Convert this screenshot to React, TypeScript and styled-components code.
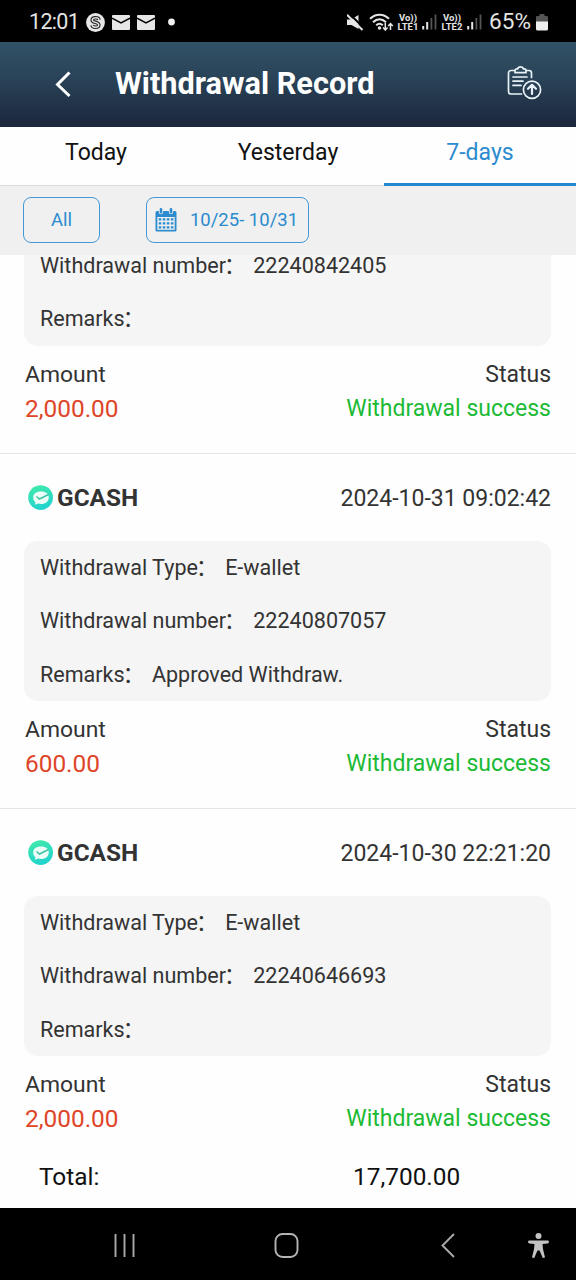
import React from "react";
import styled, { createGlobalStyle } from "styled-components";

const GlobalStyle = createGlobalStyle`
  * { box-sizing: border-box; }
  body { margin: 0; background: #000; font-family: Roboto, "Noto Sans CJK SC", sans-serif; }
`;

const Screen = styled.div`
  width: 576px;
  height: 1280px;
  display: flex;
  flex-direction: column;
  overflow: hidden;
  background: #fefefe;
  color: #333;
`;

const StatusBar = styled.div`
  height: 42px;
  flex: none;
  display: flex;
  align-items: center;
  justify-content: space-between;
  background: #000;
  color: #e4e4e4;
  padding: 2px 28px 0 29px;
`;

const StatusGroup = styled.div<{ $gap: number }>`
  display: flex;
  align-items: center;
  gap: ${(p) => p.$gap}px;
  svg { display: block; flex: none; }
`;

const Clock = styled.span`
  font-size: 21.5px;
  line-height: 26px;
  letter-spacing: -0.7px;
  width: 50px;
  white-space: nowrap;
`;

const Battery = styled.span`
  font-size: 22.6px;
  line-height: 26px;
  width: 43px;
  margin: 0 1px 0 4px;
`;

const Volte = styled.span<{ $w: number }>`
  display: flex;
  flex-direction: column;
  align-items: center;
  width: ${(p) => p.$w}px;
  font-size: 9.5px;
  line-height: 9px;
  font-weight: 700;
  white-space: nowrap;
`;

const Header = styled.header`
  height: 85px;
  flex: none;
  display: flex;
  align-items: center;
  padding: 0 34px 2px 54px;
  background: linear-gradient(#325267, #294257 45%, #1a263b);
  color: #fff;
  svg { display: block; }
`;

const Title = styled.h1`
  flex: 1;
  margin: 0 0 0 43px;
  font-size: 30.7px;
  line-height: 36px;
  font-weight: 700;
`;

const Tabs = styled.nav`
  height: 59px;
  flex: none;
  display: grid;
  grid-template-columns: repeat(3, 1fr);
  border-bottom: 1px solid #dcdcdc;
`;

const Tab = styled.div<{ $active?: boolean }>`
  height: 59px;
  padding-top: 12px;
  text-align: center;
  font-size: 23px;
  line-height: 28px;
  color: ${(p) => (p.$active ? "#2b8bce" : "#111")};
  border-bottom: ${(p) => (p.$active ? "3px solid #2488cc" : "none")};
`;

const Filters = styled.div`
  height: 69px;
  flex: none;
  display: flex;
  align-items: flex-start;
  gap: 46px;
  padding: 11px 23px 0;
  background: #f0f0f0;
`;

const FilterButton = styled.button<{ $w: number; $shift?: number }>`
  display: flex;
  align-items: center;
  justify-content: center;
  gap: 13px;
  width: ${(p) => p.$w}px;
  height: 46px;
  padding: 0 ${(p) => p.$shift ?? 0}px 0 0;
  border: 1.4px solid #4399d6;
  border-radius: 8px;
  background: transparent;
  color: #2b8bce;
  font: 18.5px/24px Roboto, sans-serif;
`;

const List = styled.main`
  flex: 1;
  min-height: 0;
  overflow: hidden;
  display: flex;
  flex-direction: column;
`;

const Record = styled.section<{ $scrolled?: boolean }>`
  flex: none;
  padding: 0 25px 0 24px;
  margin-top: ${(p) => (p.$scrolled ? -16 : 0)}px;
  & + & { border-top: 1px solid #e4e4e4; }
`;

const RecordHead = styled.div`
  height: 87px;
  display: flex;
  align-items: center;
  padding: 1px 0 0 4px;
`;

const Wallet = styled.strong`
  flex: 1;
  margin-left: 3px;
  font-size: 24.4px;
  line-height: 30px;
  font-weight: 700;
`;

const Time = styled.time`
  font-size: 23px;
  line-height: 30px;
  padding-top: 1px;
`;

const Details = styled.div`
  height: 160px;
  background: #f5f5f5;
  border-radius: 14px;
  padding: 0 16px;
`;

const PartialDetails = styled(Details)`
  height: 107px;
`;

const Detail = styled.div`
  height: 53.5px;
  display: flex;
  align-items: center;
  font-size: 21.55px;
  line-height: 30px;
  white-space: pre;
`;

const Colon = styled.span`
  margin: 0 2.3px 0 -2px;
`;

const Summary = styled.div`
  height: 107px;
  display: grid;
  grid-template-columns: auto auto;
  justify-content: space-between;
  grid-template-rows: 34px 34px;
  padding: 12px 0 0 1px;
  font-size: 22.9px;
  line-height: 34px;
`;

const Right = styled.span<{ $success?: boolean }>`
  text-align: right;
  font-size: 23px;
  color: ${(p) => (p.$success ? "#1cba35" : "inherit")};
`;

const Amount = styled.span`
  color: #df4529;
  font-size: 24.4px;
`;

const Total = styled.footer`
  height: 62px;
  flex: none;
  display: grid;
  grid-template-columns: 314px auto;
  align-items: center;
  padding: 0 0 2px 39px;
  background: #fefefe;
  color: #111;
  font-size: 24.4px;
`;

const NavBar = styled.div`
  height: 72px;
  flex: none;
  display: flex;
  align-items: center;
  background: #000;
  padding: 3px 26px 0 113px;
  svg { display: block; }
`;

const NavSlot = styled.div<{ $w: number }>`
  width: ${(p) => p.$w}px;
`;

const Mail = () => (
  <svg width="18" height="15" viewBox="0 0 18 15">
    <rect width="18" height="15" rx="1" fill="#e6e6e6" />
    <path d="M0 3.2 9 8l9-4.8" fill="none" stroke="#000" strokeWidth="1.5" />
  </svg>
);

const Signal = () => (
  <svg width="15" height="16" viewBox="0 0 15 16">
    <path d="M1.2 12v3.5M5.2 8v7.5" stroke="#e6e6e6" strokeWidth="2" />
    <path d="M9.4 4v11.5M13.5.5v15" stroke="#555" strokeWidth="1.8" />
  </svg>
);

const GcashLogo = () => (
  <svg width="26" height="26" viewBox="0 0 26 26">
    <defs>
      <linearGradient id="mint" x1="0" y1="0" x2="0.3" y2="1">
        <stop offset="0" stopColor="#43eba8" />
        <stop offset="1" stopColor="#22d4cd" />
      </linearGradient>
    </defs>
    <circle cx="12.600" cy="12.600" r="12.400" fill="url(#mint)" />
    <path d="M13 6.500c5 0 7.800 2.200 7.800 6S17.500 19 13 19c-1 0-2-.1-2.800-.4L7 19.800l.4-2.800C5.800 16 5.200 14.400 5.200 12.500c0-3.800 2.800-6 7.800-6Z" fill="#ecfdf8" />
    <path d="m8.500 11.500 3 2.500L20.500 9.500" fill="none" stroke="#3fc5a6" strokeWidth="1.600" />
  </svg>
);

const CalendarIcon = () => (
  <svg width="22" height="24" viewBox="0 0 22 24">
    <path d="M2 3h18a1.500 1.500 0 0 1 1.500 1.500V22a1.500 1.500 0 0 1-1.500 1.500H2A1.500 1.500 0 0 1 .5 22V4.500A1.500 1.500 0 0 1 2 3Z" fill="#2b8bce" />
    <path d="M2.300 9h17.400v12.800H2.300Z" fill="#f0f0f0" />
    <path d="M6 1v3M16 1v3" stroke="#f0f0f0" strokeWidth="4.400" strokeLinecap="round" />
    <path d="M6 1.300v3M16 1.300v3" stroke="#2b8bce" strokeWidth="2.600" strokeLinecap="round" />
    <path d="M3.700 11.400h14.800M3.700 15.400h14.800M3.700 19.400h14.800" stroke="#2b8bce" strokeWidth="2.300" strokeDasharray="2.600 1.450" />
  </svg>
);

type RecordData = {
  time?: string;
  details: [string, string][];
  amount: string;
};

const records: RecordData[] = [
  {
    details: [["Withdrawal number", "22240842405"], ["Remarks", ""]],
    amount: "2,000.00",
  },
  {
    time: "2024-10-31 09:02:42",
    details: [
      ["Withdrawal Type", "E-wallet"],
      ["Withdrawal number", "22240807057"],
      ["Remarks", "Approved Withdraw."],
    ],
    amount: "600.00",
  },
  {
    time: "2024-10-30 22:21:20",
    details: [
      ["Withdrawal Type", "E-wallet"],
      ["Withdrawal number", "22240646693"],
      ["Remarks", ""],
    ],
    amount: "2,000.00",
  },
];

export default function App() {
  return (
    <Screen>
      <GlobalStyle />
      <StatusBar>
        <StatusGroup $gap={7}>
          <Clock>12:01</Clock>
          <svg width="19" height="19" viewBox="0 0 19 19">
            <circle cx="9.500" cy="9.500" r="9.400" fill="#e6e6e6" />
            <path d="M13 6.800C12.500 4.200 6.200 4 6.200 7.200c0 2.700 6.600 1.500 6.600 4.700 0 3.200-6.300 2.900-6.800.3" fill="none" stroke="#222" strokeWidth="3.600" />
            <path d="M13 6.800C12.500 4.200 6.200 4 6.200 7.200c0 2.700 6.600 1.500 6.600 4.700 0 3.200-6.300 2.900-6.800.3" fill="none" stroke="#e6e6e6" strokeWidth="1.400" />
          </svg>
          <Mail />
          <Mail />
          <svg width="20" height="8" viewBox="0 0 20 8">
            <circle cx="9.500" cy="4" r="3.400" fill="#f2f2f2" />
          </svg>
        </StatusGroup>
        <StatusGroup $gap={3}>
          <svg width="18" height="17" viewBox="0 0 18 17">
            <path d="M0 5.500h4L11.500 1v14l-7-4H0Z" fill="#e6e6e6" />
            <path d="M1.500-1 17.500 14.500" stroke="#000" strokeWidth="2" />
            <path d="M0 .8 15.500 16" stroke="#e6e6e6" strokeWidth="1.900" />
          </svg>
          <svg width="26" height="18" viewBox="0 0 26 18">
            <path d="M2 5.800C7.500.3 15.500.3 21 5.800M5 9.200c4-3.800 9-3.800 13 0M8.200 12.300c2-1.900 4.600-1.900 6.600 0" fill="none" stroke="#e6e6e6" strokeWidth="2" />
            <circle cx="11.500" cy="15" r="1.700" fill="#e6e6e6" />
            <path d="M17.300 10v7M15 14.500l2.300 2.500 2.300-2.500M22.500 17v-6.500M20.200 13l2.300-2.500 2.300 2.500" fill="none" stroke="#e6e6e6" strokeWidth="1.500" />
          </svg>
          <Volte $w={22}><span>Vo))</span><span>LTE1</span></Volte>
          <Signal />
          <Volte $w={24}><span>Vo))</span><span>LTE2</span></Volte>
          <Signal />
          <Battery>65%</Battery>
          <svg width="12" height="17" viewBox="0 0 12 17">
            <path d="M3.500 0h5v2H11a1 1 0 0 1 1 1v5H0V3a1 1 0 0 1 1-1h2.500Z" fill="#555" />
            <path d="M0 7.500h12V15a1.500 1.500 0 0 1-1.500 1.500h-9A1.500 1.500 0 0 1 0 15Z" fill="#f0f0f0" />
          </svg>
        </StatusGroup>
      </StatusBar>

      <Header>
        <svg width="18" height="28" viewBox="0 0 18 28">
          <path d="M15.500 2.500 3.500 14.500l12 11.500" fill="none" stroke="#fff" strokeWidth="3" />
        </svg>
        <Title>Withdrawal Record</Title>
        <svg width="36" height="36" viewBox="0 0 36 36" fill="none" stroke="#e8f2f6" strokeWidth="1.700" strokeLinecap="round" strokeLinejoin="round">
          <path d="M8.500 4.500H5A2.500 2.500 0 0 0 2.500 7v18.500A2.500 2.500 0 0 0 5 28h10.500M20.500 4.500H23A2.500 2.500 0 0 1 25.500 7v4.500" />
          <path d="M9 6.700V4.500c0-1 .8-1.600 2-1.600h.8C12 1.300 13 .9 14.500.9s2.500.4 2.700 2h.8c1.200 0 2 .6 2 1.600v2.200Z" />
          <path d="M7 11h14M7 15.200h10M7 19.400h8" />
          <circle cx="26" cy="23.700" r="8.600" />
          <path d="M26 28v-8.500M22 22.800l4-4 4 4" strokeWidth="2.200" />
        </svg>
      </Header>

      <Tabs>
        <Tab>Today</Tab>
        <Tab>Yesterday</Tab>
        <Tab $active>7-days</Tab>
      </Tabs>

      <Filters>
        <FilterButton $w={77}>All</FilterButton>
        <FilterButton $w={163} $shift={2}>
          <CalendarIcon />
          <span>10/25- 10/31</span>
        </FilterButton>
      </Filters>

      <List>
        {records.map((r, i) => {
          const Box = r.time ? Details : PartialDetails;
          return (
            <Record key={i} $scrolled={i === 0}>
              {r.time && (
                <RecordHead>
                  <GcashLogo />
                  <Wallet>GCASH</Wallet>
                  <Time>{r.time}</Time>
                </RecordHead>
              )}
              <Box>
                {r.details.map(([label, value]) => (
                  <Detail key={label}>
                    <span>{label}</span>
                    <Colon>： </Colon>
                    <span>{value}</span>
                  </Detail>
                ))}
              </Box>
              <Summary>
                <span>Amount</span>
                <Right>Status</Right>
                <Amount>{r.amount}</Amount>
                <Right $success>Withdrawal success</Right>
              </Summary>
            </Record>
          );
        })}
      </List>

      <Total>
        <span>Total:</span>
        <span>17,700.00</span>
      </Total>

      <NavBar>
        <NavSlot $w={160}>
          <svg width="24" height="26" viewBox="0 0 24 26">
            <path d="M2.500 1v23M11.500 1v23M20.500 1v23" stroke="#aaa" strokeWidth="1.900" />
          </svg>
        </NavSlot>
        <NavSlot $w={167}>
          <svg width="26" height="26" viewBox="0 0 26 26">
            <rect x="2.500" y="1" width="22" height="23" rx="7" fill="none" stroke="#b4b4b4" strokeWidth="1.900" />
          </svg>
        </NavSlot>
        <NavSlot $w={87}>
          <svg width="16" height="26" viewBox="0 0 16 26">
            <path d="M14 1 2.500 12.500 14 24" fill="none" stroke="#aaa" strokeWidth="1.900" />
          </svg>
        </NavSlot>
        <svg width="22" height="28" viewBox="0 0 22 28">
          <circle cx="11.500" cy="4" r="3" fill="#c4c4c4" />
          <path d="M2.500 8.500h18a1.200 1.200 0 0 1 0 2.900l-5 .6.500 5 2 8.500-2.200.6L12.500 18.500h-2L7.200 26.100l-2.200-.6 2-8.500.5-5-5-.6a1.200 1.200 0 0 1 0-2.900Z" fill="#c4c4c4" />
        </svg>
      </NavBar>
    </Screen>
  );
}
